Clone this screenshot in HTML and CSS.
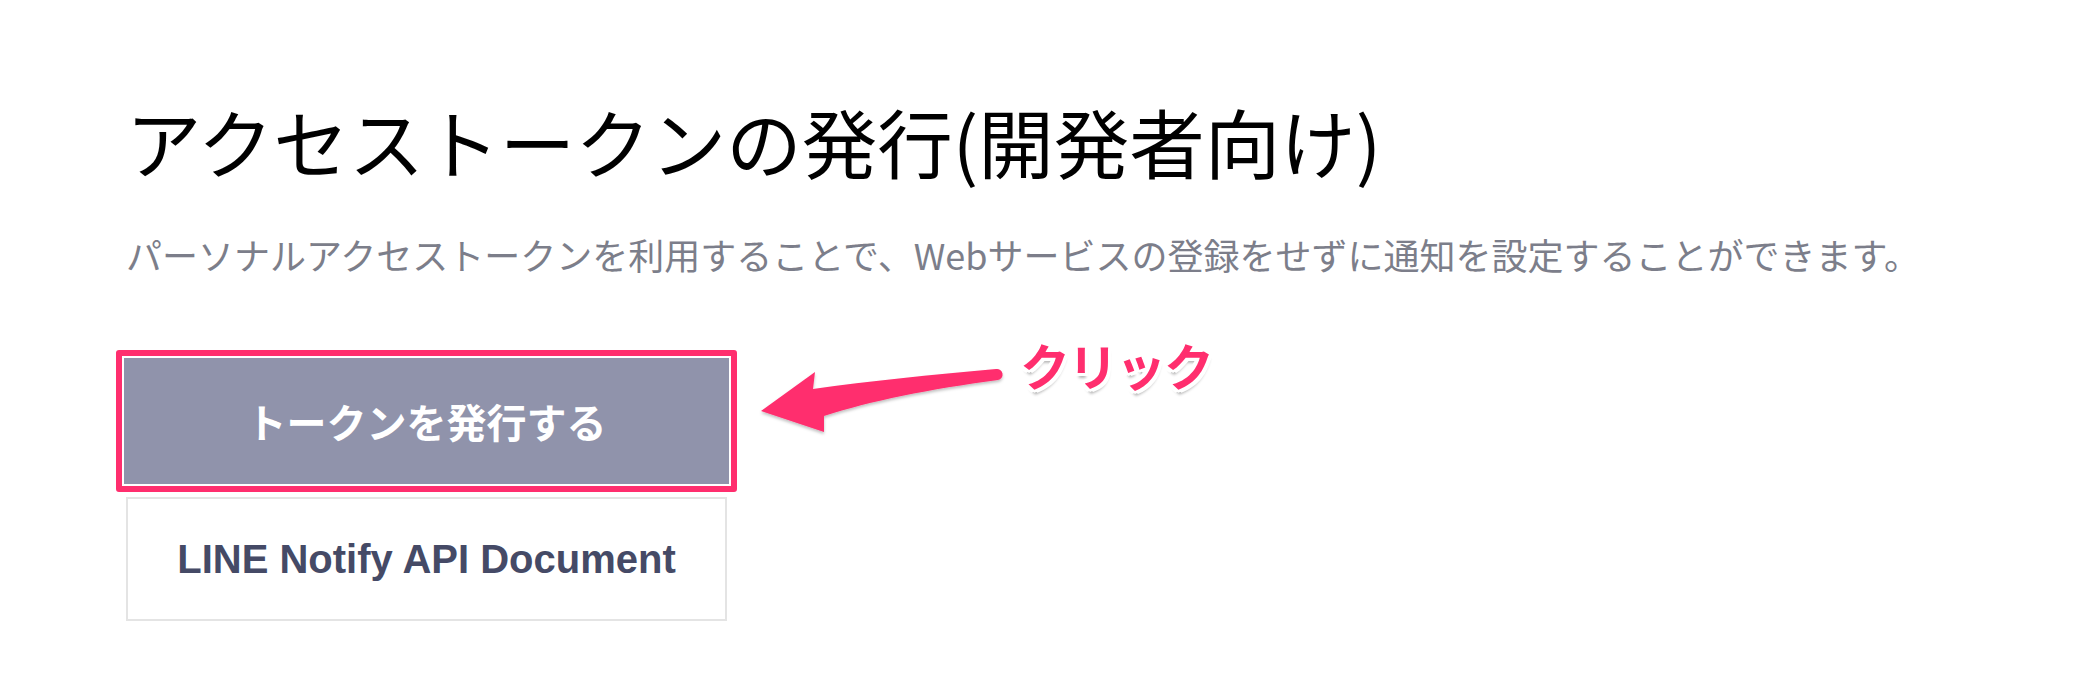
FILE: index.html
```html
<!DOCTYPE html>
<html lang="ja">
<head>
  <meta charset="UTF-8">
  <title>アクセストークンの発行(開発者向け)</title>
  <link rel="stylesheet" href="styles.css">
</head>
<body>

  <div class="page">
    <h1 class="title">アクセストークンの発行(開発者向け)</h1>
    <p class="lead">パーソナルアクセストークンを利用することで、Webサービスの登録をせずに通知を設定することができます。</p>

    <div class="actions">
      <div class="highlight">
        <button class="btn btn-issue" type="button">トークンを発行する</button>
      </div>
      <a class="btn btn-doc" href="#">LINE Notify API Document</a>

      <!-- annotation over the page -->
      <svg class="arrow" width="500" height="130" viewBox="0 0 500 130">
        <defs>
          <filter id="shade" x="-10%" y="-30%" width="120%" height="160%">
            <feDropShadow dx="0" dy="2" stdDeviation="1.5" flood-color="#000" flood-opacity="0.25"/>
          </filter>
        </defs>
        <path filter="url(#shade)" fill="#ff2e6e"
              d="M21 92 L75 53 L73 70 C130 62 190 56 256 50 A5.5 5.5 0 0 1 258 61 C190 70 130 82 84 97 L84 113 Z"/>
      </svg>
      <span class="callout">クリック</span>
    </div>
  </div>

</body>
</html>
```

FILE: styles.css
```css
body {
  margin: 0;
  background-color: #fff;
  font-family: "Noto Sans CJK JP", "Noto Sans", sans-serif;
}
.page {
  padding: 95px 0 0 126px;
}
.title {
  margin: 0;
  font-size: 75.5px;
  line-height: 90px;
  font-weight: 400;
  color: #000;
}
.lead {
  margin: 44px 0 0;
  font-size: 36px;
  line-height: 50px;
  color: #7c7e8a;
}
.actions {
  position: relative;
  margin-top: 71px;
  width: 601px;
}
.highlight {
  margin-left: -10px;
  width: 605px;
  padding: 2px;
  border: 6px solid #ff2e6e;
  border-radius: 3px;
}
.btn {
  display: flex;
  align-items: center;
  justify-content: center;
  box-sizing: border-box;
  text-decoration: none;
}
.btn-issue {
  width: 605px;
  height: 126px;
  border: none;
  background-color: #9093ab;
  color: #fff;
  font-family: "Noto Sans CJK JP", sans-serif;
  font-size: 40px;
  font-weight: 700;
}
.btn-doc {
  margin-top: 5px;
  width: 601px;
  height: 124px;
  border: 2px solid #e4e4e4;
  color: #454a66;
  font-family: "Liberation Sans", Arial, sans-serif;
  font-size: 40px;
  font-weight: 700;
}
.arrow {
  position: absolute;
  left: 614px;
  top: -31px;
}
.callout {
  position: absolute;
  left: 894px;
  top: -16px;
  white-space: nowrap;
  font-size: 50px;
  line-height: 60px;
  font-weight: 700;
  letter-spacing: -2px;
  color: #ff2e6e;
  text-shadow:
    -3px -3px 0 #fff, 3px -3px 0 #fff, -3px 3px 0 #fff, 3px 3px 0 #fff,
    0 -3px 0 #fff, 0 3px 0 #fff, -3px 0 0 #fff, 3px 0 0 #fff,
    1px 5px 3px rgba(0,0,0,0.3);
}
```
